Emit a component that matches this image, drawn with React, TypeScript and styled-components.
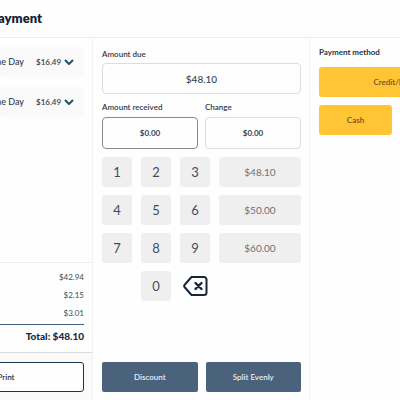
import React from "react";
import styled, { createGlobalStyle } from "styled-components";

const GlobalStyle = createGlobalStyle`
  *, *::before, *::after { box-sizing: border-box; }
  body {
    margin: 0;
    background: #fefefe;
    color: #26323f;
    font-family: Lato, "Open Sans", sans-serif;
    font-size: 8px;
    line-height: 12px;
    overflow: hidden;
  }
  button, input { font: inherit; color: inherit; margin: 0; padding: 0; border: 0; }
`;

const Page = styled.div`
  display: flex;
  flex-direction: column;
  min-height: 100vh;
`;

const Header = styled.header`
  height: 38px;
  padding-top: 10px;
  border-bottom: 1px solid #efefef;
`;

const Title = styled.h1`
  display: flex;
  justify-content: flex-end;
  width: 42px;
  margin: 0;
  font-size: 13px;
  line-height: 17px;
  font-weight: 800;
  color: #14223a;
`;

const Columns = styled.main`
  flex: 1;
  display: grid;
  grid-template-columns: minmax(0, 93fr) minmax(0, 217fr) minmax(0, 90fr);
`;

const OrderPanel = styled.section`
  display: flex;
  flex-direction: column;
  overflow: hidden;
  border-right: 1px solid #f3f3f3;
`;

const Items = styled.div`
  flex: 1;
  display: flex;
  flex-direction: column;
  gap: 10px;
  padding: 9px 8px 0 0;
`;

const Item = styled.button`
  display: flex;
  align-items: center;
  justify-content: flex-end;
  height: 30px;
  border-radius: 3px;
  background: #fafafa;
  white-space: nowrap;
`;

const ItemName = styled.span`
  flex: none;
  margin-right: 12px;
  font-size: 9px;
  font-weight: 500;
  color: #33404f;
`;

const ItemPrice = styled.span`
  flex: none;
  width: 24px;
  margin-right: 4px;
  color: #33404f;
  font-weight: 600;
`;

const Chevron = styled.svg`
  flex: none;
  width: 10px;
  height: 6px;
  margin-right: 10px;
`;

const Summary = styled.div`
  height: 90px;
  padding: 5px 8px 0 0;
  border-top: 1px solid #eeeeee;
  text-align: right;
`;

const Amounts = styled.div`
  border-bottom: 1px solid #47607a;
  padding-bottom: 2px;
`;

const AmountLine = styled.div`
  height: 18px;
  line-height: 18px;
  color: #444c55;
`;

const Total = styled.div`
  margin-top: 2px;
  font-size: 10px;
  line-height: 18px;
  font-weight: 900;
  color: #1b2a3e;
`;

const OrderFooter = styled.footer`
  display: flex;
  justify-content: flex-end;
  height: 48px;
  padding: 9px 8px 0 0;
  border-top: 1px solid #dcdcdc;
  background: #fafafa;
`;

const PrintButton = styled.button`
  flex: none;
  width: 156px;
  height: 30px;
  border: 1px solid #1d3549;
  border-radius: 3px;
  background: #fefefe;
  font-weight: 600;
`;

const EntryPanel = styled.section`
  display: flex;
  flex-direction: column;
  padding: 10px 8px 8px 9px;
  border-right: 1px solid #f5f5f5;
`;

const Field = styled.label`
  display: block;
  flex: 1;
  min-width: 0;
  font-weight: 600;
  color: #323a43;
`;

const FieldInput = styled.input<{ $size: "large" | "small"; $active?: boolean }>`
  display: block;
  width: 100%;
  height: ${(p) => (p.$size === "large" ? 31 : 32)}px;
  margin-top: ${(p) => (p.$size === "large" ? 3 : 4)}px;
  border: 1px solid ${(p) => (p.$active ? "#858a8e" : "#dcdddf")};
  border-radius: 4px;
  background: #fefefe;
  text-align: center;
  font-size: ${(p) => (p.$size === "large" ? 10 : 8)}px;
  font-weight: ${(p) => (p.$size === "large" ? 500 : 700)};
  color: #33455a;
  outline: none;
`;

const DueRow = styled.div`
  display: flex;
`;

const FieldRow = styled.div`
  display: flex;
  gap: 7px;
  margin-top: 7px;
`;

const Keypad = styled.div`
  display: grid;
  grid-template-columns: 30fr 30fr 30fr 82fr;
  grid-auto-rows: 30px;
  gap: 8px 9px;
  margin-top: 8px;
`;

const Key = styled.button<{ $preset?: boolean; $column?: number }>`
  grid-column: ${(p) => p.$column ?? "auto"};
  border-radius: 3px;
  background: #efefef;
  font-size: ${(p) => (p.$preset ? 10 : 13)}px;
  line-height: 16px;
  color: ${(p) => (p.$preset ? "#687380" : "#3f4c5c")};
`;

const EraseKey = styled.button`
  display: flex;
  align-items: center;
  justify-content: center;
  background: none;
`;

const EraseIcon = styled.svg`
  flex: none;
  width: 26px;
  height: 20px;
`;

const Actions = styled.div`
  display: flex;
  gap: 8px;
  margin-top: auto;
`;

const Action = styled.button`
  flex: 1;
  height: 30px;
  border-radius: 2px;
  background: #4a627b;
  color: #e8edf2;
  font-weight: 600;
`;

const MethodPanel = styled.section`
  padding: 8px 8px 0 9px;
  overflow: hidden;
`;

const MethodTitle = styled.h2`
  margin: 0 0 9px;
  font-size: 8px;
  line-height: 12px;
  font-weight: 700;
  white-space: nowrap;
  color: #26323f;
`;

const Method = styled.button<{ $wide?: boolean }>`
  display: block;
  width: ${(p) => (p.$wide ? 154 : 73)}px;
  height: 30px;
  margin-bottom: 8px;
  border-radius: 3px;
  background: #ffc534;
  color: #574a24;
  font-weight: 500;
`;

const items = [
  { id: 1, name: "me Day", price: "$16.49" },
  { id: 2, name: "me Day", price: "$16.49" },
];

const keyRows = [
  { digits: ["1", "2", "3"], preset: "$48.10" },
  { digits: ["4", "5", "6"], preset: "$50.00" },
  { digits: ["7", "8", "9"], preset: "$60.00" },
];

export default function App() {
  return (
    <Page>
      <GlobalStyle />
      <Header>
        <Title>ayment</Title>
      </Header>
      <Columns>
        <OrderPanel>
          <Items>
            {items.map((item) => (
              <Item key={item.id}>
                <ItemName>{item.name}</ItemName>
                <ItemPrice>{item.price}</ItemPrice>
                <Chevron viewBox="0 0 10 6" fill="none" stroke="#1f5266" strokeWidth="2" aria-hidden="true">
                  <path d="M1 1l4 4 4-4" />
                </Chevron>
              </Item>
            ))}
          </Items>
          <Summary>
            <Amounts>
              <AmountLine>$42.94</AmountLine>
              <AmountLine>$2.15</AmountLine>
              <AmountLine>$3.01</AmountLine>
            </Amounts>
            <Total>Total: $48.10</Total>
          </Summary>
          <OrderFooter>
            <PrintButton>Print</PrintButton>
          </OrderFooter>
        </OrderPanel>
        <EntryPanel>
          <DueRow>
            <Field>
              Amount due
              <FieldInput $size="large" defaultValue="$48.10" />
            </Field>
          </DueRow>
          <FieldRow>
            <Field>
              Amount received
              <FieldInput $size="small" $active defaultValue="$0.00" />
            </Field>
            <Field>
              Change
              <FieldInput $size="small" defaultValue="$0.00" />
            </Field>
          </FieldRow>
          <Keypad>
            {keyRows.map((row) => (
              <React.Fragment key={row.preset}>
                {row.digits.map((digit) => (
                  <Key key={digit}>{digit}</Key>
                ))}
                <Key $preset>{row.preset}</Key>
              </React.Fragment>
            ))}
            <Key $column={2}>0</Key>
            <EraseKey aria-label="Erase">
              <EraseIcon
                viewBox="0 0 26 20"
                fill="none"
                stroke="#17263b"
                strokeWidth="2"
                strokeLinejoin="round"
                strokeLinecap="round"
                aria-hidden="true"
              >
                <path d="M9.5 1H22a2.500 2.500 0 0 1 2.500 2.500v13a2.500 2.500 0 0 1-2.500 2.500H9.500L2.500 11a1.500 1.500 0 0 1 0-2z" />
                <path d="M13.500 7l6 6M19.500 7l-6 6" strokeWidth="2.400" />
              </EraseIcon>
            </EraseKey>
          </Keypad>
          <Actions>
            <Action>Discount</Action>
            <Action>Split Evenly</Action>
          </Actions>
        </EntryPanel>
        <MethodPanel>
          <MethodTitle>Payment method</MethodTitle>
          <Method $wide>Credit/Debit</Method>
          <Method>Cash</Method>
        </MethodPanel>
      </Columns>
    </Page>
  );
}
